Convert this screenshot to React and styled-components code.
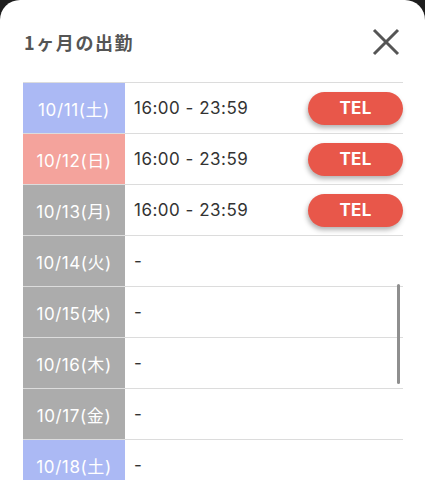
import React from "react";
import styled, { createGlobalStyle } from "styled-components";

const GlobalStyle = createGlobalStyle`
  html, body {
    margin: 0;
    background: #1e1e1e;
    font-family: Inter, "Noto Sans CJK JP", sans-serif;
  }
`;

const days = [
  { date: "10/11(土)", kind: "sat", time: "16:00 - 23:59" },
  { date: "10/12(日)", kind: "sun", time: "16:00 - 23:59" },
  { date: "10/13(月)", kind: "day", time: "16:00 - 23:59" },
  { date: "10/14(火)", kind: "day" },
  { date: "10/15(水)", kind: "day" },
  { date: "10/16(木)", kind: "day" },
  { date: "10/17(金)", kind: "day" },
  { date: "10/18(土)", kind: "sat" },
  { date: "10/19(日)", kind: "sun" },
];

const dayColors = {
  sat: "#abb9f4",
  sun: "#f4a39c",
  day: "#acacac",
};

const Sheet = styled.div`
  position: relative;
  height: 480px;
  background: #fff;
  border-radius: 20px 20px 0 0;
  overflow: hidden;
`;

const Header = styled.div`
  display: flex;
  align-items: center;
  justify-content: space-between;
  height: 82px;
  padding: 2px 25px 0 24px;
  box-sizing: border-box;
`;

const Title = styled.h1`
  margin: 0;
  font-family: "Noto Sans CJK JP", sans-serif;
  font-size: 18px;
  font-weight: 700;
  color: #555;
  letter-spacing: 1.6px;
`;

const CloseButton = styled.button`
  display: flex;
  padding: 0;
  border: 0;
  background: none;
  cursor: pointer;
`;

const Table = styled.div`
  margin: 0 22px 0 23px;
  border-top: 1px solid #dcdcdc;
`;

const Row = styled.div`
  display: grid;
  grid-template-columns: 102px 1fr;
  height: 50px;
  border-bottom: 1px solid #dcdcdc;
`;

const DateCell = styled.div`
  display: flex;
  align-items: center;
  justify-content: center;
  background: ${(p) => dayColors[p.$kind]};
  color: #fff;
  font-size: 17px;
  letter-spacing: 0.6px;
`;

const TimeCell = styled.div`
  display: flex;
  align-items: center;
  justify-content: space-between;
  padding-left: 9px;
  color: #333;
  font-size: 17px;
  letter-spacing: 0.5px;
`;

const TelButton = styled.button`
  width: 95px;
  height: 33px;
  border: 0;
  border-radius: 17px;
  background: #e8574a;
  color: #fff;
  font-family: Inter, sans-serif;
  font-size: 17px;
  font-weight: 700;
  letter-spacing: 0.3px;
  box-shadow: -1px 3px 5px rgba(0, 0, 0, 0.3);
  cursor: pointer;
`;

const ScrollThumb = styled.div`
  position: absolute;
  left: 397px;
  top: 284px;
  width: 3px;
  height: 100px;
  border-radius: 2px;
  background: #8f8f8f;
`;

const CloseIcon = () => (
  <svg width="28" height="28" viewBox="0 0 28 28">
    <path d="M2 2 L26 26 M26 2 L2 26" stroke="#555" strokeWidth="3" />
  </svg>
);

export default function App() {
  return (
    <>
      <GlobalStyle />
      <Sheet>
        <Header>
          <Title>1ヶ月の出勤</Title>
          <CloseButton aria-label="close">
            <CloseIcon />
          </CloseButton>
        </Header>
        <Table>
          {days.map((d) => (
            <Row key={d.date}>
              <DateCell $kind={d.kind}>{d.date}</DateCell>
              <TimeCell>
                {d.time || "-"}
                {d.time && <TelButton>TEL</TelButton>}
              </TimeCell>
            </Row>
          ))}
        </Table>
        <ScrollThumb />
      </Sheet>
    </>
  );
}
